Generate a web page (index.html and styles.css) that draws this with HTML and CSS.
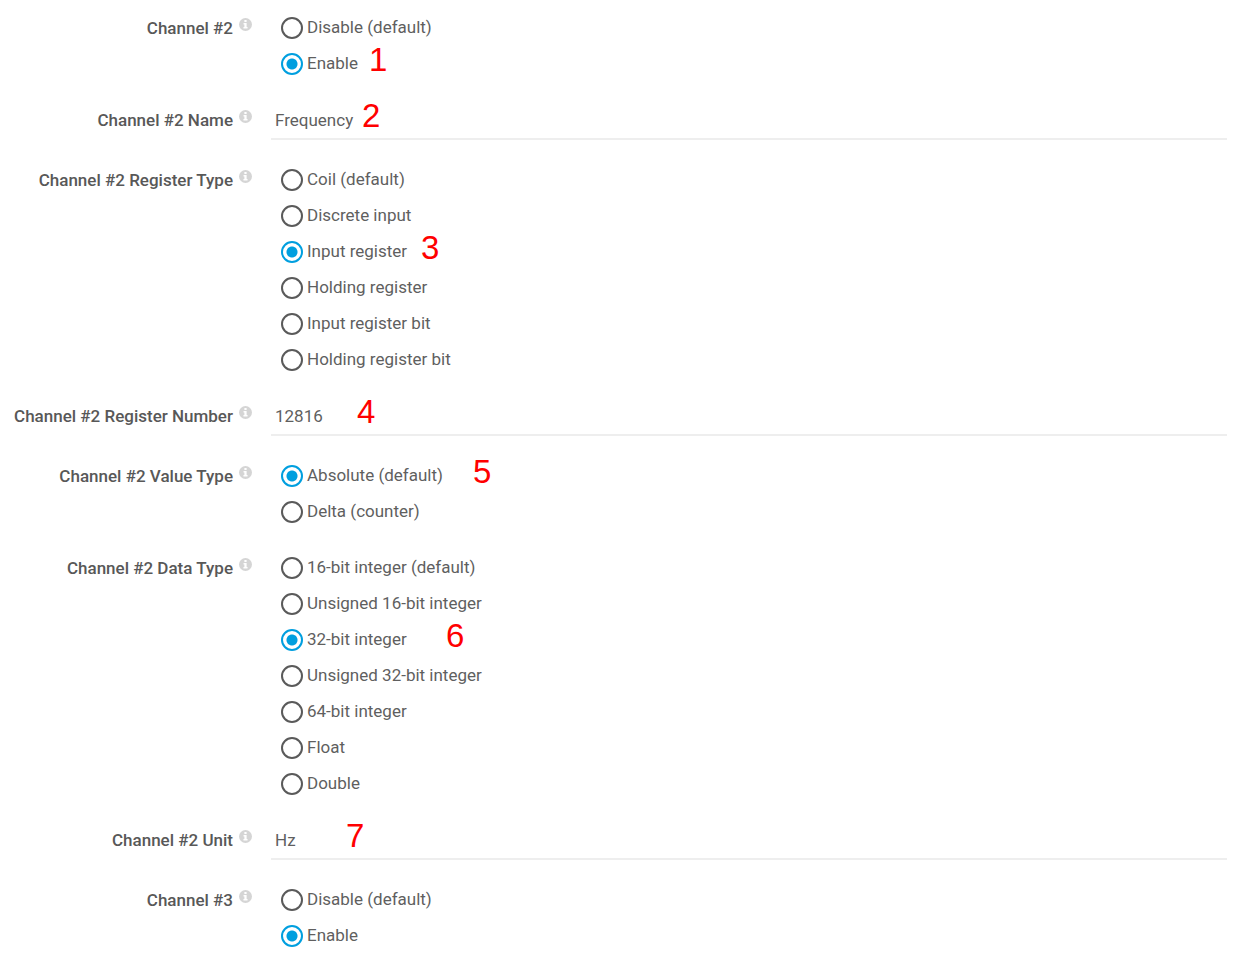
FILE: index.html
```html
<!DOCTYPE html>
<html lang="en">
<head>
  <meta charset="UTF-8" />
  <meta name="viewport" content="width=device-width, initial-scale=1.0" />
  <title>Channel settings</title>
  <link rel="stylesheet" href="styles.css">
</head>
<body>
  <svg class="sprite" aria-hidden="true">
    <symbol id="info" viewBox="0 0 14 14">
      <circle cx="7" cy="7" r="7" fill="#d5d5d5" />
      <path d="M5.8 2.2h2.4v2H5.8zM4.9 5.3h3.3v4.4h1v1.6H4.8V9.7h1V6.9h-.9z" fill="#fff" />
    </symbol>
  </svg>

  <form class="settings">
    <div class="row">
      <div class="title" id="ch2">Channel #2 <svg class="info"><use href="#info" /></svg></div>
      <div class="options" role="radiogroup" aria-labelledby="ch2">
        <div class="option"><label><input type="radio" name="ch2"><span>Disable (default)</span></label></div>
        <div class="option"><label><input type="radio" name="ch2" checked><span>Enable</span></label><b class="step step-1">1</b></div>
      </div>
    </div>

    <div class="row">
      <label class="title" for="name">Channel #2 Name <svg class="info"><use href="#info" /></svg></label>
      <div class="field"><input type="text" id="name" value="Frequency"><b class="step step-2">2</b></div>
    </div>

    <div class="row">
      <div class="title" id="regtype">Channel #2 Register Type <svg class="info"><use href="#info" /></svg></div>
      <div class="options" role="radiogroup" aria-labelledby="regtype">
        <div class="option"><label><input type="radio" name="regtype"><span>Coil (default)</span></label></div>
        <div class="option"><label><input type="radio" name="regtype"><span>Discrete input</span></label></div>
        <div class="option"><label><input type="radio" name="regtype" checked><span>Input register</span></label><b class="step step-3">3</b></div>
        <div class="option"><label><input type="radio" name="regtype"><span>Holding register</span></label></div>
        <div class="option"><label><input type="radio" name="regtype"><span>Input register bit</span></label></div>
        <div class="option"><label><input type="radio" name="regtype"><span>Holding register bit</span></label></div>
      </div>
    </div>

    <div class="row">
      <label class="title" for="number">Channel #2 Register Number <svg class="info"><use href="#info" /></svg></label>
      <div class="field"><input type="text" id="number" value="12816"><b class="step step-4">4</b></div>
    </div>

    <div class="row">
      <div class="title" id="valtype">Channel #2 Value Type <svg class="info"><use href="#info" /></svg></div>
      <div class="options" role="radiogroup" aria-labelledby="valtype">
        <div class="option"><label><input type="radio" name="valtype" checked><span>Absolute (default)</span></label><b class="step step-5">5</b></div>
        <div class="option"><label><input type="radio" name="valtype"><span>Delta (counter)</span></label></div>
      </div>
    </div>

    <div class="row">
      <div class="title" id="datatype">Channel #2 Data Type <svg class="info"><use href="#info" /></svg></div>
      <div class="options" role="radiogroup" aria-labelledby="datatype">
        <div class="option"><label><input type="radio" name="datatype"><span>16-bit integer (default)</span></label></div>
        <div class="option"><label><input type="radio" name="datatype"><span>Unsigned 16-bit integer</span></label></div>
        <div class="option"><label><input type="radio" name="datatype" checked><span>32-bit integer</span></label><b class="step step-6">6</b></div>
        <div class="option"><label><input type="radio" name="datatype"><span>Unsigned 32-bit integer</span></label></div>
        <div class="option"><label><input type="radio" name="datatype"><span>64-bit integer</span></label></div>
        <div class="option"><label><input type="radio" name="datatype"><span>Float</span></label></div>
        <div class="option"><label><input type="radio" name="datatype"><span>Double</span></label></div>
      </div>
    </div>

    <div class="row">
      <label class="title" for="unit">Channel #2 Unit <svg class="info"><use href="#info" /></svg></label>
      <div class="field"><input type="text" id="unit" value="Hz"><b class="step step-7">7</b></div>
    </div>

    <div class="row">
      <div class="title" id="ch3">Channel #3 <svg class="info"><use href="#info" /></svg></div>
      <div class="options" role="radiogroup" aria-labelledby="ch3">
        <div class="option"><label><input type="radio" name="ch3"><span>Disable (default)</span></label></div>
        <div class="option"><label><input type="radio" name="ch3" checked><span>Enable</span></label></div>
      </div>
    </div>
  </form>
</body>
</html>
```
FILE: styles.css
```css
* {
  box-sizing: border-box;
}

body {
  margin: 0;
  background-color: #fff;
  color: #5f5f5f;
  font-family: Roboto, sans-serif;
  font-size: 17px;
}

.sprite {
  display: none;
}

.settings {
  display: flex;
  flex-direction: column;
  gap: 20px;
  padding: 10px 20px 0 0;
}

.row {
  display: grid;
  grid-template-columns: 252px 1fr;
  column-gap: 19px;
}

.title {
  display: flex;
  justify-content: flex-end;
  gap: 6px;
  font-weight: 500;
  line-height: 36px;
  white-space: nowrap;
  color: #585858;
}

.info {
  width: 13px;
  height: 13px;
  margin-top: 8px;
}

.option,
.field {
  position: relative;
}

.option {
  height: 36px;
  padding-left: 10px;
}

.option label {
  display: inline-flex;
  align-items: center;
  gap: 4px;
  height: 36px;
}

.option span {
  padding-bottom: 3px;
}

.option input {
  appearance: none;
  width: 22px;
  height: 22px;
  margin: 0;
  border: 2px solid #5a5a5a;
  border-radius: 50%;
}

.option input:checked {
  border-color: #009fdf;
  background: radial-gradient(circle, #009fdf 5px, #fff 6px);
}

.field {
  height: 40px;
}

.field input {
  display: block;
  width: 100%;
  height: 38px;
  padding: 0 4px;
  border: none;
  border-bottom: 2px solid #eee;
  background: none;
  color: inherit;
  font: inherit;
  outline: none;
}

/* red step numbers over the form */
.step {
  position: absolute;
  top: -4px;
  color: #f00;
  font-family: "Liberation Sans", Arial, sans-serif;
  font-size: 33px;
  font-weight: 400;
  line-height: 36px;
}

.step-1 { left: 98px; }
.step-2 { left: 91px; }
.step-3 { left: 150px; }
.step-4 { left: 86px; }
.step-5 { left: 202px; }
.step-6 { left: 175px; }
.step-7 { left: 75px; }
```
